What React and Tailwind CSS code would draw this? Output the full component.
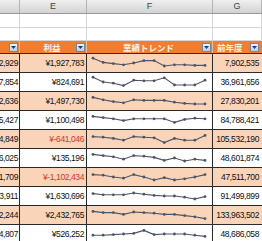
import React from "react";

const rows = [
  { d: "1,102,929", e: "¥1,927,783", g: "7,902,535", s: [0.1, 0.45, 0.55, 0.65, 0.5, 0.3, 0.3, 0.75, 0.65, 0.65, 0.7, 0.7] },
  { d: "1,207,854", e: "¥824,691", g: "36,961,656", s: [0.1, 0.5, 0.6, 0.8, 0.35, 0.4, 0.4, 0.15, 0.75, 0.75, 0.75, 0.35] },
  { d: "1,302,636", e: "¥1,497,730", g: "27,830,201", s: [0.2, 0.4, 0.55, 0.65, 0.4, 0.45, 0.45, 0.45, 0.6, 0.7, 0.75, 0.75] },
  { d: "1,405,427", e: "¥1,100,498", g: "84,788,421", s: [0.2, 0.3, 0.4, 0.55, 0.4, 0.4, 0.4, 0.4, 0.7, 0.45, 0.35, 0.4] },
  { d: "1,504,849", e: "¥-641,046", g: "105,532,190", neg: true, s: [0.3, 0.35, 0.45, 0.6, 0.3, 0.35, 0.4, 0.8, 0.45, 0.6, 0.6, 0.2] },
  { d: "1,606,025", e: "¥135,196", g: "48,601,874", s: [0.2, 0.3, 0.4, 0.6, 0.3, 0.35, 0.45, 0.7, 0.5, 0.75, 0.6, 0.7] },
  { d: "1,701,709", e: "¥-1,102,434", g: "47,511,700", neg: true, s: [0.3, 0.35, 0.5, 0.6, 0.3, 0.5, 0.75, 0.55, 0.75, 0.65, 0.5, 0.3] },
  { d: "1,803,911", e: "¥1,630,696", g: "91,499,899", s: [0.3, 0.4, 0.4, 0.4, 0.25, 0.35, 0.45, 0.5, 0.5, 0.6, 0.75, 0.55] },
  { d: "1,902,244", e: "¥2,432,765", g: "133,963,502", s: [0.2, 0.3, 0.3, 0.45, 0.25, 0.3, 0.35, 0.45, 0.45, 0.55, 0.65, 0.8] },
  { d: "1,004,807", e: "¥526,252", g: "48,686,058", s: [0.6, 0.6, 0.55, 0.5, 0.45, 0.2, 0.55, 0.5, 0.5, 0.5, 0.6, 0.7] },
];

function Spark({ data }) {
  const x0 = 6;
  const x1 = 118;
  const pts = data.map((v, i) => [x0 + ((x1 - x0) * i) / (data.length - 1), 3 + v * 12]);
  const d = pts.map((p, i) => `${i ? "L" : "M"}${p[0].toFixed(1)} ${p[1].toFixed(1)}`).join(" ");
  return (
    <svg width="125" height="18" viewBox="0 0 125 18" className="block">
      <path d={d} fill="none" stroke="#4c5568" strokeWidth="1.1" />
      {pts.map((p, i) => (
        <circle key={i} cx={p[0]} cy={p[1]} r="1.4" fill="#4c5568" />
      ))}
    </svg>
  );
}

function Filter() {
  return (
    <div className="w-[9px] h-[9px] shrink-0 border border-[#6f86a6] bg-gradient-to-b from-[#eef4fb] to-[#b9cde2] flex items-center justify-center">
      <svg width="5" height="3" viewBox="0 0 5 3" className="block">
        <path d="M0 0 L5 0 L2.5 3 Z" fill="#1d3b73" />
      </svg>
    </div>
  );
}

export default function App() {
  return (
    <div className="w-[262px] h-[241px] overflow-hidden bg-white font-['Liberation_Sans',Arial,sans-serif] text-[#111]">
      {/* column letters */}
      <div className="flex h-[14px] border-b border-[#9a9a9a] bg-gradient-to-b from-[#f0f0f0] to-[#d2d2d2] text-[9px] text-[#444] leading-[13px]">
        <div className="w-[20px] border-r border-[#b4b4b4]" />
        <div className="w-[67px] border-r border-[#b4b4b4] text-center">E</div>
        <div className="w-[126px] border-r border-[#b4b4b4] text-center">F</div>
        <div className="w-[49px] border-r border-[#b4b4b4] text-center">G</div>
      </div>
      {/* blank rows */}
      {[14, 13].map((h, i) => (
        <div key={i} className={`flex border-b border-[#d6d6d6] ${h === 14 ? "h-[14px]" : "h-[13px]"}`}>
          <div className="w-[20px] border-r border-[#d6d6d6]" />
          <div className="w-[67px] border-r border-[#d6d6d6]" />
          <div className="w-[126px] border-r border-[#d6d6d6]" />
          <div className="w-[49px] border-r border-[#d6d6d6]" />
        </div>
      ))}
      {/* orange header */}
      <div className="flex h-[13px] bg-[#ef7e33] border-b border-[#3a2a20] text-[8.5px] text-[#fff1e6] font-bold leading-[12px] font-['Noto_Sans_CJK_JP',sans-serif]">
        <div className="w-[20px] border-r border-[#f7b68a] flex items-center justify-end pr-[1px]">
          <Filter />
        </div>
        <div className="w-[67px] border-r border-[#f7b68a] flex items-center pr-[1px]">
          <span className="flex-1 text-center pl-[8px]">利益</span>
          <Filter />
        </div>
        <div className="w-[126px] border-r border-[#f7b68a] flex items-center pr-[1px]">
          <span className="flex-1 text-center pl-[8px]">業績トレンド</span>
          <Filter />
        </div>
        <div className="w-[49px] flex items-center pr-[3px] overflow-hidden">
          <span className="flex-1 pl-[4px] whitespace-nowrap">前年度</span>
          <Filter />
        </div>
      </div>
      {/* data rows */}
      {rows.map((r, i) => (
        <div
          key={i}
          className={`flex h-[19px] border-b border-[#2a2a2a] text-[8.5px] tracking-[-0.4px] leading-[18px] ${i % 2 === 0 ? "bg-[#f9d4b9]" : "bg-white"}`}
        >
          <div className="w-[20px] border-r border-[#2a2a2a] overflow-hidden flex justify-end pr-px whitespace-nowrap">
            {r.d}
          </div>
          <div className={`w-[67px] border-r border-[#2a2a2a] text-right pr-[2px] whitespace-nowrap ${r.neg ? "text-[#e0312a]" : ""}`}>
            {r.e}
          </div>
          <div className="w-[126px] border-r border-[#2a2a2a]">
            <Spark data={r.s} />
          </div>
          <div className="w-[49px] text-right pr-[3px] whitespace-nowrap">{r.g}</div>
        </div>
      ))}
    </div>
  );
}
